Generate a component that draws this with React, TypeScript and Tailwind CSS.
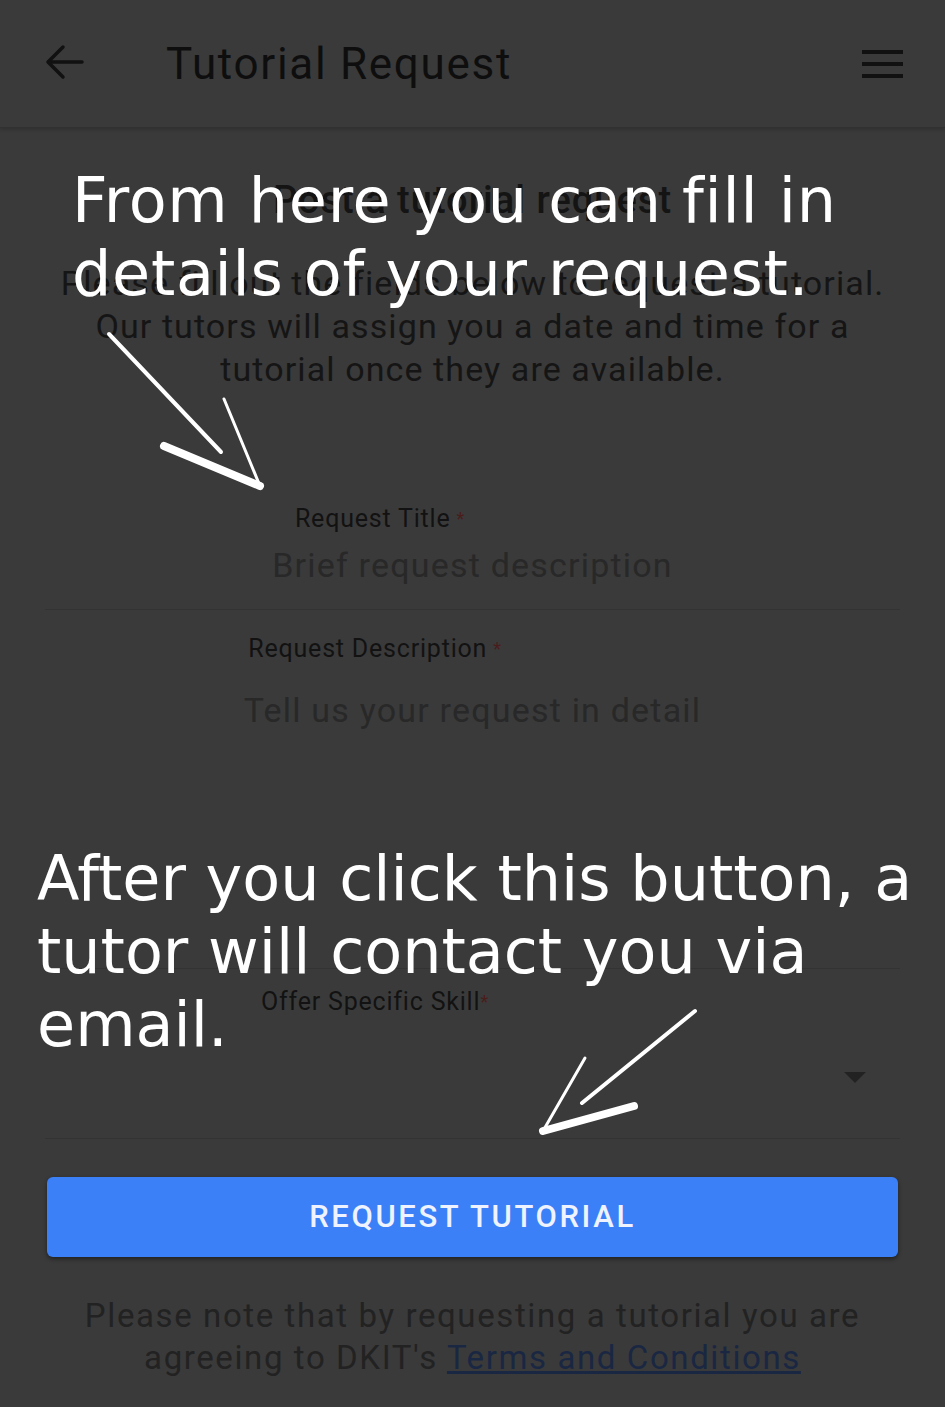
import React from "react";

const roboto = { fontFamily: "Roboto, 'Liberation Sans', sans-serif" };
const dejavu = { fontFamily: "'DejaVu Sans', sans-serif" };

function Label({ text, gap = true }: { text: string; gap?: boolean }) {
  return (
    <div className="pr-[195px] text-center text-[25px] leading-[32px] tracking-[0.8px] text-[#121212]">
      {text}
      <span className={`${gap ? "ml-[6px]" : ""} text-[18px] align-top text-[#4a1c1c]`}>*</span>
    </div>
  );
}

function Placeholder({ text, className = "" }: { text: string; className?: string }) {
  return (
    <div
      className={`text-center text-[34px] leading-[44px] tracking-[1.2px] text-[#282828] ${className}`}
    >
      {text}
    </div>
  );
}

export default function App() {
  return (
    <div
      className="relative w-[945px] h-[1407px] overflow-hidden bg-[#3a3a3a]"
      style={roboto}
    >
      {/* app bar */}
      <header className="h-[128px] flex items-center border-b border-[#313131] shadow-[0_2px_3px_rgba(0,0,0,0.15)]">
        <svg width="40" height="40" viewBox="0 0 40 40" className="ml-[44px]">
          <path
            d="M38 18 H5 M19 3 L4 18 L19 33"
            fill="none"
            stroke="#111"
            strokeWidth="3.5"
            strokeLinecap="round"
            strokeLinejoin="round"
          />
        </svg>
        <h1 className="ml-[82px] text-[44px] leading-none tracking-[1.7px] text-[#0e0e0e] flex-1">
          Tutorial Request
        </h1>
        <div className="mr-[42px] flex flex-col gap-[8px]">
          <span className="block w-[41px] h-[4px] bg-[#111]" />
          <span className="block w-[41px] h-[4px] bg-[#111]" />
          <span className="block w-[41px] h-[4px] bg-[#111]" />
        </div>
      </header>

      <main className="px-[45px]">
        <h2 className="mt-[50px] text-center text-[38px] leading-[44px] tracking-[1px] font-medium text-[#141414]">
          Post a tutorial request
        </h2>
        <p className="mt-[40px] -mx-[40px] text-center text-[34px] leading-[43px] tracking-[1.1px] text-[#151515]">
          Please fill out the fields below to request a tutorial.
          <br />
          Our tutors will assign you a date and time for a
          <br />
          tutorial once they are available.
        </p>

        <div className="mt-[112px] border-b border-[#333] pb-[22px]">
          <div className="pl-[10px]">
            <Label text="Request Title" />
          </div>
          <Placeholder text="Brief request description" className="mt-[8px]" />
        </div>

        <div className="pt-[23px] h-[359px] border-b border-[#333]">
          <Label text="Request Description" />
          <Placeholder text="Tell us your request in detail" className="mt-[23px]" />
        </div>

        <div className="pt-[17px] h-[170px] border-b border-[#333]">
          <Label text="Offer Specific Skill" gap={false} />
          <div className="mt-[54px] flex justify-end pr-[34px]">
            <svg width="22" height="12" viewBox="0 0 22 12">
              <path d="M0 0 H22 L11 11 Z" fill="#222" />
            </svg>
          </div>
        </div>

        <button className="mt-[38px] mx-[2px] w-[851px] h-[80px] rounded-[6px] bg-[#3b80f7] shadow-[0_2px_4px_rgba(0,0,0,0.45)] text-[31px] font-medium tracking-[2.6px] text-[#eef3ff]">
          REQUEST TUTORIAL
        </button>

        <p className="mt-[38px] -mx-[20px] text-center text-[33px] leading-[42px] tracking-[1.6px] text-[#222]">
          Please note that by requesting a tutorial you are
          <br />
          agreeing to DKIT's{" "}
          <span className="underline text-[#1a2742]">Terms and Conditions</span>
        </p>
      </main>

      {/* tutorial annotations */}
      <div
        className="absolute left-[72px] top-[164px] text-white text-[62px] leading-[73px] tracking-[0.7px] [font-variant-ligatures:none]"
        style={dejavu}
      >
        From here you can fill in
        <br />
        details of your request.
      </div>
      <div
        className="absolute left-[37px] top-[842px] text-white text-[62px] leading-[73px] [font-variant-ligatures:none]"
        style={dejavu}
      >
        After you click this button, a
        <br />
        tutor will contact you via
        <br />
        email.
      </div>

      <svg
        className="absolute inset-0 pointer-events-none"
        width="945"
        height="1407"
        viewBox="0 0 945 1407"
      >
        <g fill="none" stroke="#fff" strokeLinecap="round">
          <path d="M109 334 L221 452" strokeWidth="4" />
          <path d="M224 399 L260 486" strokeWidth="3" />
          <path d="M164 446 L260 486" strokeWidth="8" />
          <path d="M695 1011 L582 1103" strokeWidth="4" />
          <path d="M585 1058 L543 1131" strokeWidth="3" />
          <path d="M543 1131 L634 1106" strokeWidth="8" />
        </g>
      </svg>
    </div>
  );
}
